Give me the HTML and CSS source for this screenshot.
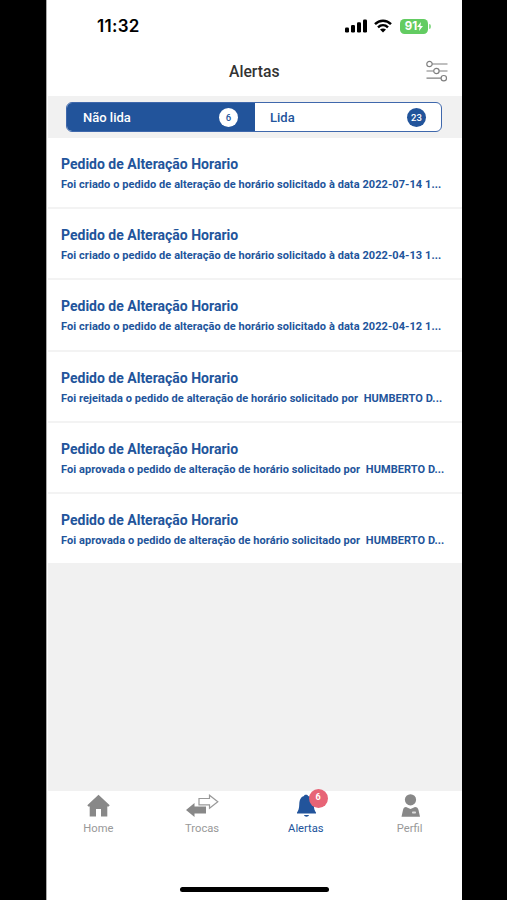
FILE: index.html
```
<!DOCTYPE html>
<html lang="pt">
<head>
  <meta charset="UTF-8">
  <meta name="viewport" content="width=device-width, initial-scale=1.0">
  <title>Alertas</title>
  <link rel="stylesheet" href="styles.css">
</head>
<body>
  <div class="screen">
    <div class="status-bar">
      <span class="time">11:32</span>
      <div class="status-icons">
        <svg class="signal" width="22" height="14" viewBox="0 0 22 14">
          <rect x="0" y="8.5" width="4" height="5" rx="1.2"/>
          <rect x="6" y="6" width="4" height="7.5" rx="1.2"/>
          <rect x="12" y="3.3" width="4" height="10.2" rx="1.2"/>
          <rect x="18" y="0.5" width="4" height="13" rx="1.2"/>
        </svg>
        <svg class="wifi" width="18" height="14" viewBox="0 0 18 14">
          <path d="M1 5.2C5.5 .6 12.5 .6 17 5.2M4 8.4c2.9-2.8 7.1-2.8 10 0" fill="none" stroke="#000" stroke-width="2.4"/>
          <path d="M9 13.5L6 10.5c1.6-1.5 4.4-1.5 6 0z"/>
        </svg>
        <div class="battery">
          <span>91</span>
          <svg width="6" height="9" viewBox="0 0 6 9"><path d="M4 0L0 5h2.6L2 9l4-5H3.4z" fill="#fff"/></svg>
        </div>
        <div class="battery-tip"></div>
      </div>
    </div>

    <header class="header">
      <h1>Alertas</h1>
      <svg class="filter" width="22" height="22" viewBox="0 0 22 22">
        <path d="M6 4h15.5M.5 11h7M13 11h8.5M.5 18.2h14.5"/>
        <circle cx="3.5" cy="4" r="2.7"/>
        <circle cx="10.4" cy="11" r="2.7"/>
        <circle cx="17.8" cy="18.2" r="2.7"/>
      </svg>
    </header>

    <div class="tabs-bar">
      <div class="tabs">
        <div class="tab active"><span>Não lida</span><span class="count">6</span></div>
        <div class="tab"><span>Lida</span><span class="count">23</span></div>
      </div>
    </div>

    <main class="list">
      <div class="item">
        <h2>Pedido de Alteração Horario</h2>
        <p>Foi criado o pedido de alteração de horário solicitado à data 2022-07-14 1...</p>
      </div>
      <div class="item">
        <h2>Pedido de Alteração Horario</h2>
        <p>Foi criado o pedido de alteração de horário solicitado à data 2022-04-13 1...</p>
      </div>
      <div class="item">
        <h2>Pedido de Alteração Horario</h2>
        <p>Foi criado o pedido de alteração de horário solicitado à data 2022-04-12 1...</p>
      </div>
      <div class="item">
        <h2>Pedido de Alteração Horario</h2>
        <p>Foi rejeitada o pedido de alteração de horário solicitado por&nbsp; HUMBERTO D...</p>
      </div>
      <div class="item">
        <h2>Pedido de Alteração Horario</h2>
        <p>Foi aprovada o pedido de alteração de horário solicitado por&nbsp; HUMBERTO D...</p>
      </div>
      <div class="item">
        <h2>Pedido de Alteração Horario</h2>
        <p>Foi aprovada o pedido de alteração de horário solicitado por&nbsp; HUMBERTO D...</p>
      </div>
    </main>

    <nav class="nav">
      <div class="nav-item">
        <svg width="24" height="24" viewBox="0 0 24 24">
          <path d="M12.500 .8L1.300 11.200l1 1.300h1.400V22.600h6.300V15h5v7.600h6.300V12.500h1.400l1-1.300z"/>
        </svg>
        <span>Home</span>
      </div>
      <div class="nav-item">
        <svg width="34" height="24" viewBox="0 0 34 24">
          <path d="M1 16L9.500 9v3.500H21V19.500H9.500V23z"/>
          <path class="outline" d="M14 4.500h10.500V1.200L32.800 7.800l-8.300 6.400v-3.400H14z"/>
        </svg>
        <span>Trocas</span>
      </div>
      <div class="nav-item selected">
        <svg width="24" height="24" viewBox="0 0 24 24">
          <path d="M10 2C10 .2 14 .2 14 2c4.500 1 5.500 4 5.700 8 .2 4.500.8 6.500 2.300 8.500v1H3v-1c1.500-2 2.100-4 2.300-8.500.2-4 1.200-7 4.700-8zM10 21h5c-.5 2.200-4.500 2.200-5 0z"/>
        </svg>
        <b class="badge">6</b>
        <span>Alertas</span>
      </div>
      <div class="nav-item">
        <svg width="24" height="24" viewBox="0 0 24 24">
          <circle cx="12.5" cy="5.8" r="5.6"/>
          <path d="M8 13l4.500 2 4.500-2c2 0 3 1 3.500 3l1.500 6.800H3.500L5 16c.4-2 1.300-3 3-3z"/>
          <rect x="14" y="17.500" width="4" height="2" rx=".8" fill="#ddd"/>
        </svg>
        <span>Perfil</span>
      </div>
    </nav>
    <div class="home-indicator"></div>
  </div>
</body>
</html>
```

FILE: styles.css
```
* {
  box-sizing: border-box;
}

body {
  margin: 0;
  height: 900px;
  background: #000;
  font-family: Roboto, "Open Sans", sans-serif;
  overflow: hidden;
}

.screen {
  width: 416px;
  height: 900px;
  margin-left: 46px;
  background: #fff;
  border-left: 1px solid #aaa;
  display: flex;
  flex-direction: column;
}

.status-bar {
  height: 52px;
  padding: 0 31px 0 50px;
  display: flex;
  align-items: center;
  justify-content: space-between;
}

.time {
  font: 600 17px Inter, sans-serif;
  letter-spacing: 0.3px;
}

.status-icons {
  display: flex;
  align-items: center;
}

.wifi {
  margin: 0 8px 0 7px;
}

.battery {
  width: 28px;
  height: 15px;
  border-radius: 4.5px;
  background: #63cc62;
  color: #fff;
  display: flex;
  align-items: center;
  justify-content: center;
  font: 700 11.5px Inter, sans-serif;
}

.battery-tip {
  width: 2px;
  height: 5px;
  margin-left: 1px;
  border-radius: 0 2px 2px 0;
  background: #8edb8d;
}

.header {
  height: 44px;
  padding: 0 14px 0 182px;
  display: flex;
  align-items: center;
  justify-content: space-between;
}

h1 {
  margin: -4px 0 0;
  font-size: 15.7px;
  line-height: 20px;
  font-weight: 500;
  color: #333;
}

.filter {
  margin-top: -6px;
  fill: #fff;
  stroke: #808080;
  stroke-width: 1.2;
}

.tabs-bar {
  height: 42px;
  margin-left: 1px;
  padding: 6px 20px 6px 18px;
  background: #f1f1f1;
}

.tabs {
  height: 30px;
  display: flex;
  border: 1px solid #3f68ac;
  border-radius: 6px;
  overflow: hidden;
  background: #fff;
}

.tab {
  flex: 1;
  padding: 0 15px;
  display: flex;
  align-items: center;
  justify-content: space-between;
  font-size: 13px;
  font-weight: 500;
  color: #22549b;
}

.tab.active {
  flex: 0 0 188px;
  padding: 0 17px 0 16px;
  background: #22549b;
  color: #fff;
}

.count {
  width: 19px;
  height: 19px;
  border-radius: 50%;
  background: #22549b;
  color: #fff;
  font-size: 9.5px;
  line-height: 19px;
  text-align: center;
}

.active .count {
  background: #fff;
  color: #22549b;
}

.list {
  height: 653px;
  margin-left: 1px;
  background: #f1f1f1;
}

.item {
  height: 71.2px;
  padding: 16px 0 0 13px;
  background: #fff;
  border-bottom: 2px solid #f3f3f3;
  color: #22549b;
  white-space: nowrap;
}

.item:last-child {
  height: 69px;
  border-bottom: none;
}

.item h2 {
  margin: 0;
  font-size: 14px;
  line-height: 20px;
  font-weight: 700;
}

.item p {
  margin: 3px 0 0;
  font-size: 11px;
  line-height: 16px;
  font-weight: 700;
  letter-spacing: 0.065px;
}

.nav {
  height: 60px;
  display: flex;
}

.nav-item {
  position: relative;
  flex: 1;
  padding-top: 3px;
  display: flex;
  flex-direction: column;
  align-items: center;
  font-size: 11.2px;
  line-height: 16px;
  color: #999;
}

.nav-item svg {
  margin-left: -1px;
  fill: #888;
}

.nav-item .outline {
  fill: #fff;
  stroke: #999;
  stroke-width: 1.2;
}

.nav-item span {
  margin: 3px 0 0 -1px;
}

.selected {
  color: #22549b;
}

.selected svg {
  fill: #22549b;
}

.badge {
  position: absolute;
  top: -2px;
  left: 54px;
  width: 19px;
  height: 19px;
  border-radius: 50%;
  background: #e76476;
  color: #fff;
  font-size: 9px;
  line-height: 17px;
  text-align: center;
}

.home-indicator {
  width: 149px;
  height: 5px;
  margin: 36px 0 0 133px;
  border-radius: 3px;
  background: #000;
}
```
